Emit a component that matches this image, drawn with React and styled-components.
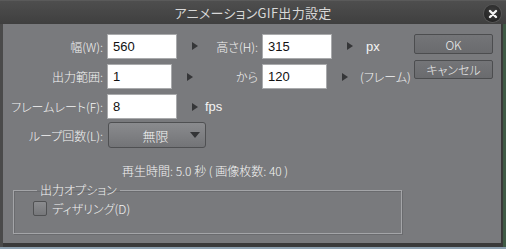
import React from "react";
import styled, { createGlobalStyle } from "styled-components";

const GlobalStyle = createGlobalStyle`
  html, body {
    margin: 0;
    padding: 0;
    background: #3b3b3b;
  }
  body {
    font-family: "Noto Sans CJK JP", "Liberation Sans", sans-serif;
    font-feature-settings: "palt";
  }
`;

const Window = styled.div`
  width: 506px;
  height: 249px;
  display: flex;
  flex-direction: column;
  background: #3d3d3d;
  overflow: hidden;
`;

const TitleBar = styled.div`
  position: relative;
  height: 24px;
  flex: none;
  display: flex;
  align-items: center;
  justify-content: center;
  background: linear-gradient(#4e4e4e, #3f3f3f);
  border-top: 1px solid #5a5a5a;
  box-sizing: border-box;
  color: #d8d8d8;
  font-size: 13px;
  letter-spacing: 0.3px;
`;

const CloseButton = styled.div`
  position: absolute;
  right: 5px;
  top: 4px;
  width: 17px;
  height: 17px;
  border-radius: 50%;
  background: radial-gradient(circle at 50% 35%, #3a3a3a, #1e1e1e);
  box-shadow: 0 0 0 1px #555;
  display: flex;
  align-items: center;
  justify-content: center;
`;

const Frame = styled.div`
  flex: 1;
  display: flex;
  flex-direction: column;
  padding: 0 5px 0 3px;
  background: linear-gradient(90deg, #4a4a4a 0 3px, #3a3a3a 3px calc(100% - 3px), #3f5a45 calc(100% - 3px));
`;

const Body = styled.div`
  height: 219px;
  background: #797a7d;
  display: flex;
  color: #f4f4f4;
  font-size: 12px;
  font-weight: 300;
`;

const BottomStrip = styled.div`
  margin: 4px -5px 0 -3px;
  flex: 1;
  background: #8ea2b2;
`;

const Form = styled.div`
  flex: 1;
  padding-top: 10px;
  display: flex;
  flex-direction: column;
`;

const Row = styled.div`
  display: flex;
  align-items: center;
  height: ${(p) => p.$h || 25}px;
  margin-bottom: ${(p) => p.$mb ?? 5}px;
`;

const Label = styled.div`
  width: ${(p) => p.$w || 100}px;
  text-align: right;
  flex: none;
  white-space: nowrap;
`;

const Field = styled.div`
  width: ${(p) => p.$w || 105}px;
  flex: none;
  display: flex;
  align-items: center;
  margin-left: 4px;
`;

const Input = styled.div`
  width: ${(p) => p.$w}px;
  height: 25px;
  box-sizing: border-box;
  background: #fff;
  border: 1px solid #a9aaac;
  color: #111;
  font-family: "Liberation Sans", sans-serif;
  font-weight: 400;
  font-size: 13px;
  padding-left: 5px;
  display: flex;
  align-items: center;
`;

const Arrow = styled.div`
  margin-left: 15px;
  width: 0;
  height: 0;
  border-top: 4px solid transparent;
  border-bottom: 4px solid transparent;
  border-left: 6px solid #353638;
  flex: none;
`;

const Unit = styled.div`
  margin-left: ${(p) => p.$ml || 12}px;
  white-space: nowrap;
  font-size: ${(p) => (p.$latin ? 13 : 12)}px;
  font-family: ${(p) => (p.$latin ? '"Liberation Sans", sans-serif' : "inherit")};
`;

const Select = styled.div`
  margin-left: 5px;
  width: 98px;
  height: 26px;
  box-sizing: border-box;
  border: 1px solid #4f5052;
  border-radius: 3px;
  background: linear-gradient(#8a8b8e, #737477);
  display: flex;
  align-items: center;
  padding: 0 5px 0 0;
`;

const SelectText = styled.div`
  flex: 1;
  text-align: center;
  padding-left: 12px;
  font-size: 13px;
`;

const Caret = styled.div`
  width: 0;
  height: 0;
  border-left: 5px solid transparent;
  border-right: 5px solid transparent;
  border-top: 6px solid #333436;
`;

const Summary = styled.div`
  padding-left: 119px;
  margin-top: 14px;
  font-size: 12px;
  white-space: nowrap;
`;

const Group = styled.fieldset`
  margin: 4px 0 0 10px;
  width: 389px;
  height: 51px;
  box-sizing: border-box;
  border: 1px solid #a4a5a8;
  box-shadow: 1px 1px 0 #6a6b6e, inset 1px 1px 0 #6a6b6e;
  padding: 3px 0 0 19px;
  display: flex;
  align-items: flex-start;
`;

const Legend = styled.legend`
  padding: 0 3px;
  margin-left: 4px;
  font-size: 12px;
  line-height: 14px;
`;

const CheckRow = styled.label`
  display: flex;
  align-items: center;
  gap: 5px;
  font-size: 12px;
`;

const Box = styled.div`
  width: 14px;
  height: 15px;
  box-sizing: border-box;
  border: 1px solid #505153;
  border-radius: 2px;
  background: linear-gradient(#8b8c8f, #76777a);
`;

const Side = styled.div`
  width: 87px;
  flex: none;
  padding-top: 10px;
  display: flex;
  flex-direction: column;
  gap: 6px;
`;

const Button = styled.div`
  width: 79px;
  height: ${(p) => p.$h}px;
  box-sizing: border-box;
  border: 1px solid #4c4d4f;
  border-radius: 2px;
  background: linear-gradient(#747578, #6a6b6e);
  display: flex;
  align-items: center;
  justify-content: center;
  font-size: 12px;
  color: #eee;
`;

function FieldWithArrow({ w, fw, value, unit, unitMl, latin }) {
  return (
    <Field $w={fw}>
      <Input $w={w}>{value}</Input>
      <Arrow />
      {unit && (
        <Unit $ml={unitMl} $latin={latin}>
          {unit}
        </Unit>
      )}
    </Field>
  );
}

export default function App() {
  return (
    <>
      <GlobalStyle />
      <Window>
        <TitleBar>
          アニメーションGIF出力設定
          <CloseButton>
            <svg width="10" height="10" viewBox="0 0 10 10">
              <path d="M2 2L8 8M8 2L2 8" stroke="#f2f2f2" strokeWidth="2.4" strokeLinecap="round" />
            </svg>
          </CloseButton>
        </TitleBar>
        <Frame>
          <Body>
            <Form>
              <Row $h={24} $mb={6}>
                <Label>幅(W):</Label>
                <FieldWithArrow w={70} fw={105} value="560" />
                <Label $w={46}>高さ(H):</Label>
                <FieldWithArrow w={70} fw={140} value="315" unit="px" unitMl={13} latin />
              </Row>
              <Row $mb={5}>
                <Label>出力範囲:</Label>
                <FieldWithArrow w={65} fw={105} value="1" />
                <Label $w={46}>から</Label>
                <FieldWithArrow w={65} fw={150} value="120" unit="(フレーム)" unitMl={12} />
              </Row>
              <Row $mb={3}>
                <Label>フレームレート(F):</Label>
                <FieldWithArrow w={70} fw={140} value="8" unit="fps" unitMl={7} latin />
              </Row>
              <Row $h={26} $mb={0}>
                <Label>ループ回数(L):</Label>
                <Select>
                  <SelectText>無限</SelectText>
                  <Caret />
                </Select>
              </Row>
              <Summary>再生時間: 5.0 秒 ( 画像枚数: 40 )</Summary>
              <Group>
                <Legend>出力オプション</Legend>
                <CheckRow>
                  <Box />
                  ディザリング(D)
                </CheckRow>
              </Group>
            </Form>
            <Side>
              <Button $h={20}>OK</Button>
              <Button $h={19}>キャンセル</Button>
            </Side>
          </Body>
          <BottomStrip />
        </Frame>
      </Window>
    </>
  );
}
